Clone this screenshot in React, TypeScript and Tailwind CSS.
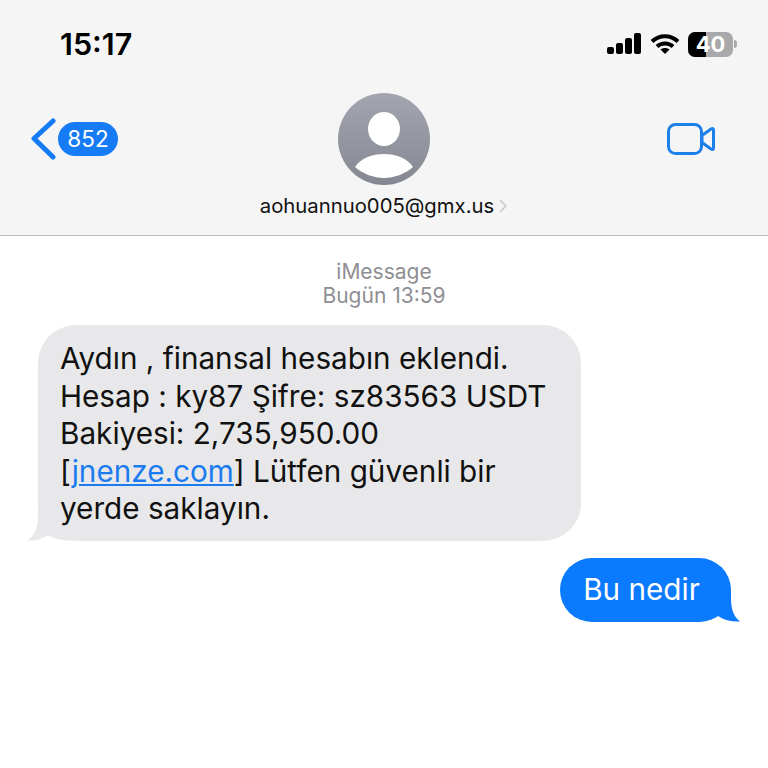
export default function App() {
  return (
    <div className="h-[768px] w-[768px] overflow-hidden bg-white font-['Inter',sans-serif]">
      <header className="h-[236px] border-b border-[#bdbdc0] bg-[#f5f5f6]">
        {/* status bar */}
        <div className="flex h-[88px] items-center justify-between pl-[60px] pr-[31px]">
          <span className="text-[30.500px] font-semibold text-black">15:17</span>
          <div className="flex items-center gap-[8px]">
            <svg width="36" height="22" viewBox="0 0 36 22" fill="#000">
              <rect x="1" y="14" width="7" height="7" rx="2" />
              <rect x="10" y="10" width="7" height="11" rx="2" />
              <rect x="19" y="5" width="7" height="16" rx="2" />
              <rect x="28" y="0" width="7" height="21" rx="2" />
            </svg>
            <svg width="30" height="22" viewBox="0 0 30 22" fill="none" stroke="#000" strokeWidth="4">
              <path d="M2 8.500C9.500 1.500 20.500 1.500 28 8.500" />
              <path d="M7 13.500C11.500 9.500 18.500 9.500 23 13.500" />
              <path d="M15 21L10.500 16.500C13 14.500 17 14.500 19.500 16.500Z" fill="#000" stroke="none" />
            </svg>
            <div className="flex items-center gap-[1px]">
              <div className="relative flex h-[25px] w-[45px] items-center justify-center overflow-hidden rounded-[7px] bg-[#a9a9ab]">
                <div className="absolute inset-y-0 left-0 w-[18px] bg-black" />
                <span className="relative text-[22px] font-bold text-white">40</span>
              </div>
              <div className="h-[8px] w-[3px] rounded-r-full bg-[#a9a9ab]" />
            </div>
          </div>
        </div>
        {/* nav */}
        <div className="grid h-[102px] grid-cols-[1fr_auto_1fr] items-start">
          <div className="mt-[30px] flex items-center gap-[2px] pl-[30px]">
            <svg width="26" height="42" viewBox="0 0 26 42" fill="none" stroke="#157cf5" strokeWidth="5" strokeLinecap="round" strokeLinejoin="round">
              <path d="M23 3L4 20.500L23 39" />
            </svg>
            <span className="flex h-[34px] w-[60px] items-center justify-center rounded-full bg-[#157cf5] text-[22.500px] text-white">852</span>
          </div>
          <div className="mt-[5px] flex flex-col items-center">
            <svg width="92" height="92" viewBox="0 0 92 92">
              <defs>
                <linearGradient id="avatar" x1="0" y1="0" x2="0" y2="1">
                  <stop offset="0" stopColor="#a3a6af" />
                  <stop offset="1" stopColor="#858892" />
                </linearGradient>
              </defs>
              <circle cx="46" cy="46" r="46" fill="url(#avatar)" />
              <ellipse cx="46" cy="36" rx="16" ry="17" fill="#fff" />
              <path d="M17 74C23 65 34 61 46 61C58 61 69 65 75 74C67 81 56 85 46 85C36 85 25 81 17 74Z" fill="#fff" />
            </svg>
            <div className="mt-[9px] flex items-center gap-[4px]">
              <span className="text-[20.300px] leading-[24px] text-[#111]">aohuannuo005@gmx.us</span>
              <svg width="10" height="16" viewBox="0 0 10 16" fill="none" stroke="#c7c7cc" strokeWidth="1.500">
                <path d="M2 2L8 8L2 14" />
              </svg>
            </div>
          </div>
          <div className="flex justify-end pr-[52px]">
            <svg className="mt-[33px]" width="50" height="36" viewBox="0 0 50 36" fill="none" stroke="#1d7fe8" strokeWidth="3" strokeLinejoin="round">
              <rect x="2.500" y="3.500" width="33" height="29" rx="7" />
              <path d="M36 14.500L45 8C46.500 7 47.500 7.600 47.500 9V27C47.500 28.400 46.500 29 45 28L36 21.500Z" />
            </svg>
          </div>
        </div>
      </header>
      <main className="flex flex-col pt-[24px]">
        <div className="text-center text-[21px] leading-[24px] text-[#8e8e93]">
          <p>iMessage</p>
          <p>Bugün 13:59</p>
        </div>
        {/* incoming */}
        <div className="relative ml-[38px] mt-[17px] w-[543px] rounded-[38px] bg-[#e8e8ea] pb-[13px] pl-[22px] pr-[10px] pt-[15px] text-[29.700px] leading-[37.500px] text-[#111]">
          <svg className="absolute -left-[11px] bottom-0" width="44" height="34" viewBox="0 0 44 34" fill="#e8e8ea">
            <path d="M11 0V10C11 20 8 28 1 33.500C8 34 15 32 21 28C26 31 32 33 42 34V0Z" />
          </svg>
          <p className="relative">
            Aydın , finansal hesabın eklendi.<br />
            Hesap : ky87 Şifre: sz83563 USDT<br />
            Bakiyesi: 2,735,950.00<br />
            [<span className="text-[#1a7cf0] underline decoration-2 underline-offset-2">jnenze.com</span>] Lütfen güvenli bir<br />
            yerde saklayın.
          </p>
        </div>
        {/* outgoing */}
        <div className="relative ml-[560px] mt-[17px] flex h-[64px] w-[171px] items-center justify-center rounded-[32px] bg-[#0a7aff] pr-[8px] text-[29.700px] text-white">
          <svg className="absolute -right-[9px] bottom-0" width="44" height="30" viewBox="0 0 44 30" fill="#0a7aff">
            <path d="M35 0V6C35 16 37 24 44 29.500C36 30 28 28 22 24C18 27 10 29 0 30V0Z" />
          </svg>
          <span className="relative">Bu nedir</span>
        </div>
      </main>
    </div>
  );
}
